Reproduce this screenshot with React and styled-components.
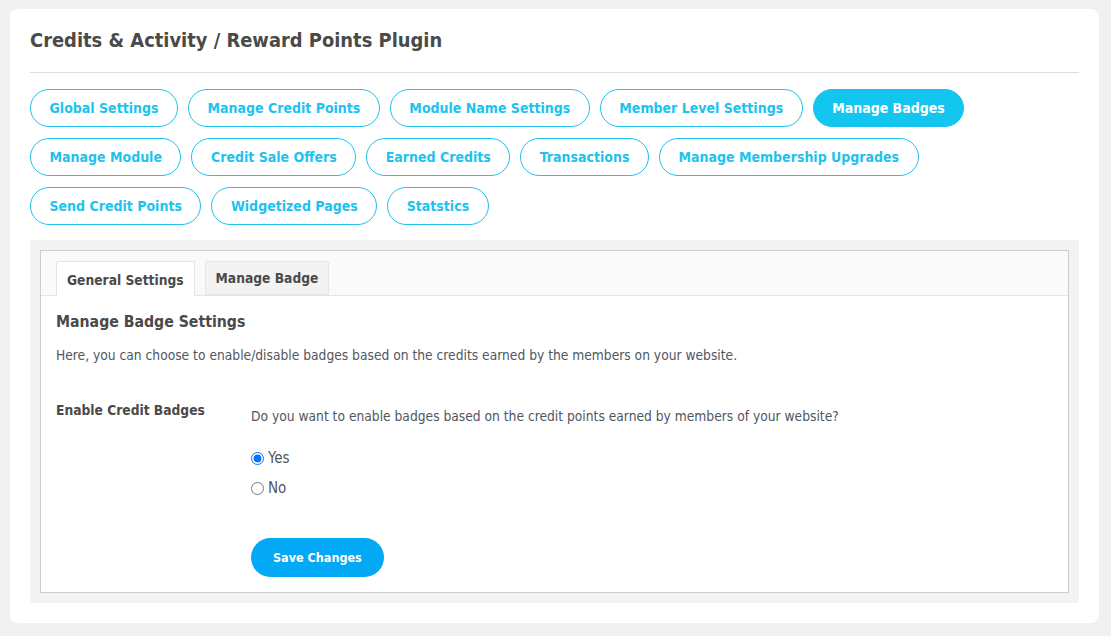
import React, { useState } from "react";
import styled, { createGlobalStyle } from "styled-components";

const Global = createGlobalStyle`
  html, body { margin: 0; padding: 0; background: #f1f1f1; }
  body { font-family: "DejaVu Sans Condensed", "DejaVu Sans", sans-serif; color: #50575e; }
  * { box-sizing: border-box; }
`;

const Page = styled.div`
  padding: 9px 12px 14px 10px;
`;

const Card = styled.div`
  background: #fff;
  border-radius: 8px;
  padding: 20px 20px 20px 20px;
  min-height: 613px;
`;

const Title = styled.h1`
  margin: 0;
  font-size: 19.9px;
  font-weight: bold;
  color: #4a4a4a;
  line-height: 24px;
  padding: 0 0 19px;
  border-bottom: 1px solid #dddddd;
`;

const NavWrap = styled.div`
  display: flex;
  flex-wrap: wrap;
  gap: 11px 10px;
  padding-top: 16px;
  padding-bottom: 15px;
`;

const NavButton = styled.button`
  height: 38px;
  border-radius: 19px;
  border: 1px solid #1ec2ee;
  background: ${(p) => (p.$active ? "#12c6f0" : "#fff")};
  color: ${(p) => (p.$active ? "#fff" : "#1ec2ee")};
  font-family: inherit;
  font-weight: bold;
  font-size: 14px;
  padding: 0 18.5px;
  cursor: pointer;
`;

const Gray = styled.div`
  background: #f3f3f3;
  padding: 10px;
`;

const Panel = styled.div`
  border: 1px solid #cccccc;
  background: #fff;
`;

const TabBar = styled.div`
  background: #fafafa;
  border-bottom: 1px solid #e5e5e5;
  display: flex;
  gap: 10px;
  padding: 10px 15px 0;
  height: 45px;
`;

const Tab = styled.div`
  height: ${(p) => (p.$active ? "35px" : "34px")};
  border: 1px solid #e5e5e5;
  border-bottom: ${(p) => (p.$active ? "none" : "1px solid #e5e5e5")};
  border-radius: 2px 2px 0 0;
  background: ${(p) => (p.$active ? "#fff" : "#f3f3f3")};
  padding: 0 10px;
  font-size: 13.7px;
  font-weight: bold;
  color: #4a4a4a;
  display: flex;
  align-items: center;
  padding-top: ${(p) => (p.$active ? "2px" : "0")};
`;

const Body = styled.div`
  padding: 15px 15px 15px;
`;

const Heading = styled.h2`
  margin: 0;
  font-size: 15.7px;
  font-weight: bold;
  color: #4a4a4a;
  line-height: 22px;
`;

const Desc = styled.p`
  margin: 12px 0 0;
  font-size: 13.7px;
  line-height: 20px;
  color: #50575e;
`;

const Row = styled.div`
  display: grid;
  grid-template-columns: 195px 1fr;
  margin-top: 35px;
`;

const Label = styled.div`
  font-size: 13.7px;
  font-weight: bold;
  color: #4a4a4a;
  line-height: 20px;
`;

const Field = styled.div`
  padding-top: 6px;
  display: flex;
  flex-direction: column;
`;

const Question = styled.div`
  font-size: 13.7px;
  line-height: 20px;
`;

const Radios = styled.div`
  display: flex;
  flex-direction: column;
  gap: 10px;
  margin-top: 22px;
`;

const RadioLabel = styled.label`
  display: flex;
  align-items: center;
  gap: 4px;
  font-size: 15px;
  line-height: 20px;
  color: #50575e;
`;

const Radio = styled.input`
  margin: 0;
  width: 13px;
  height: 13px;
`;

const Save = styled.button`
  align-self: flex-start;
  margin-top: 40px;
  height: 39px;
  border-radius: 20px;
  border: none;
  background: #03a9f4;
  color: #fff;
  font-family: inherit;
  font-weight: bold;
  font-size: 12.5px;
  padding: 0 22px;
  cursor: pointer;
`;

const navRows = [
  "Global Settings",
  "Manage Credit Points",
  "Module Name Settings",
  "Member Level Settings",
  "Manage Badges",
  "Manage Module",
  "Credit Sale Offers",
  "Earned Credits",
  "Transactions",
  "Manage Membership Upgrades",
  "Send Credit Points",
  "Widgetized Pages",
  "Statstics",
];

export default function App() {
  const [val, setVal] = useState("yes");
  return (
    <>
      <Global />
      <Page>
        <Card>
          <Title>Credits &amp; Activity / Reward Points Plugin</Title>
          <NavWrap>
            {navRows.map((n) => (
              <NavButton key={n} $active={n === "Manage Badges"}>
                {n}
              </NavButton>
            ))}
          </NavWrap>
          <Gray>
            <Panel>
              <TabBar>
                <Tab $active>General Settings</Tab>
                <Tab>Manage Badge</Tab>
              </TabBar>
              <Body>
                <Heading>Manage Badge Settings</Heading>
                <Desc>
                  Here, you can choose to enable/disable badges based on the credits earned by the members on your website.
                </Desc>
                <Row>
                  <Label>Enable Credit Badges</Label>
                  <Field>
                    <Question>
                      Do you want to enable badges based on the credit points earned by members of your website?
                    </Question>
                    <Radios>
                      <RadioLabel>
                        <Radio type="radio" name="b" checked={val === "yes"} onChange={() => setVal("yes")} />
                        Yes
                      </RadioLabel>
                      <RadioLabel>
                        <Radio type="radio" name="b" checked={val === "no"} onChange={() => setVal("no")} />
                        No
                      </RadioLabel>
                    </Radios>
                    <Save>Save Changes</Save>
                  </Field>
                </Row>
              </Body>
            </Panel>
          </Gray>
        </Card>
      </Page>
    </>
  );
}
